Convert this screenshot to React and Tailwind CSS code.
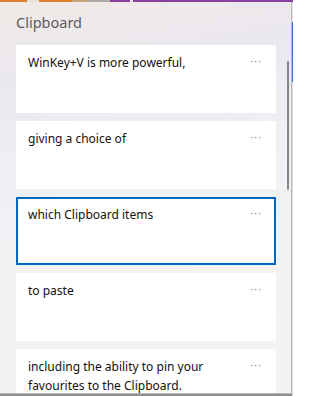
import React from 'react'

const items = [
  'WinKey+V is more powerful,',
  'giving a choice of',
  'which Clipboard items',
  'to paste',
  'including the ability to pin your favourites to the Clipboard.',
]

const Card = ({text, selected}) => {
  return (
    <div
      className={
        selected
          ? 'h-[68px] shrink-0 bg-white border-2 border-[#0067c0] flex items-start justify-between pl-[10px] pr-[12px] pt-[6px]'
          : 'h-[68px] shrink-0 bg-white flex items-start justify-between pl-3 pr-[14px] pt-[8px]'
      }
    >
      <p className="text-[12px] leading-[19px] text-[#111] w-[200px]">{text}</p>
      <span className="text-[11px] leading-3 text-[#9a9a9a] tracking-[1px] pt-[2px]">···</span>
    </div>
  )
}

const App = () => {
  return (
    <div className="w-[293px] h-[396px] overflow-hidden bg-[#8f8f8f] flex flex-col" style={{fontFamily: '"Noto Sans", "Open Sans", sans-serif'}}>
      <div className="h-[2px] flex shrink-0">
        <div className="w-[27px] bg-[#d9822b]" />
        <div className="w-[12px] bg-[#e9e3dc]" />
        <div className="w-[33px] bg-[#d9822b]" />
        <div className="w-[16px] bg-[#c8a27a]" />
        <div className="w-[22px] bg-[#a9a9a9]" />
        <div className="w-[20px] bg-[#8b3fa0]" />
        <div className="w-[3px] bg-[#eee]" />
        <div className="flex-1 bg-[#8b3fa0]" />
      </div>
      <div className="flex flex-1 min-h-0">
        <div className="relative w-[292px] h-[392px] overflow-hidden border-r border-b border-[#b9b9b9] bg-[linear-gradient(170deg,#f1ebe6_0%,#ebe7ef_18%,#eef0f4_40%,#f2f2f3_65%,#f3f3f3_100%)]">
          <h1 className="pl-4 pt-[10px] text-[14.5px] leading-5 text-[#5c5c5c]">Clipboard</h1>
          <div className="mt-[13px] px-4 flex flex-col gap-2 w-[292px]">
            {items.map((t, i) => (
              <Card key={i} text={t} selected={i === 2} />
            ))}
          </div>
          <div className="absolute left-[287px] top-[59px] w-[2px] h-[129px] rounded-full bg-[#878787]" />
        </div>
        <div className="flex-1 flex flex-col">
          <div className="h-[20px] bg-[#e8e4ee]" />
          <div className="h-[60px] bg-[#3a7fc0]" />
          <div className="flex-1 bg-[#d9dbe0]" />
        </div>
      </div>
    </div>
  )
}

export default App
